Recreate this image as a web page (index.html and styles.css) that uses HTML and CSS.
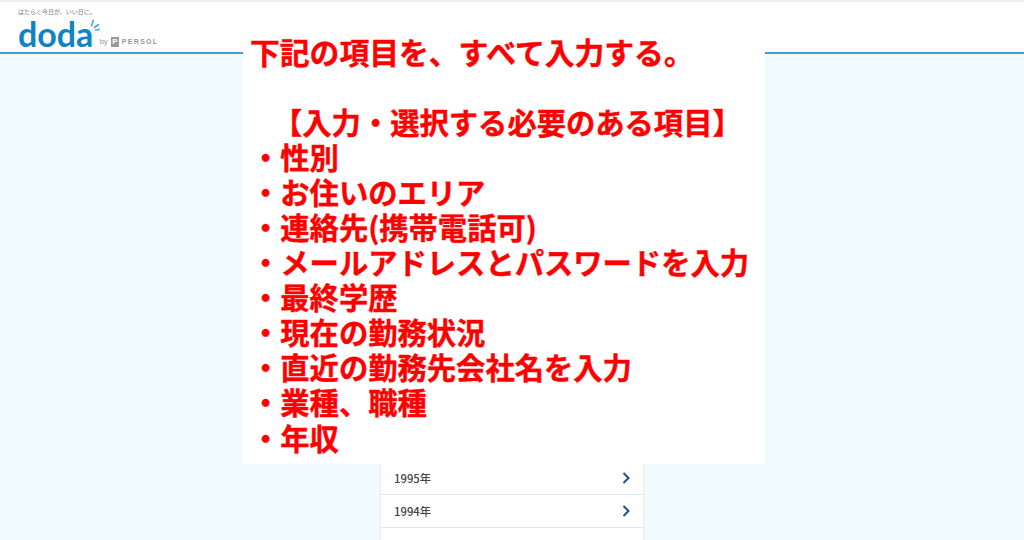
FILE: index.html
```html
<!DOCTYPE html>
<html lang="ja">
<head>
<meta charset="utf-8">
<title>doda</title>
<link rel="stylesheet" href="styles.css">
</head>
<body>
<div class="page">
  <header class="site-header">
    <div class="brand">
      <p class="tagline">はたらく今日が、いい日に。</p>
      <div class="logo-row">
        <span class="logo">doda</span>
        <svg class="spark" viewBox="0 0 10 12" width="10" height="12"><path d="M1.5 7 3.2 1.5M4.5 8.5 8.5 5.5M5.5 11 9.5 10.5" stroke="#4aa8dc" stroke-width="1.6" fill="none" stroke-linecap="round"/></svg>
        <span class="by">by</span>
        <span class="pmark">P</span>
        <span class="persol">PERSOL</span>
      </div>
    </div>
  </header>
  <main class="content">
    <ul class="year-list">
      <li class="year"><span>1995年</span><svg class="chev" viewBox="0 0 8 12" width="8" height="12"><path d="M1.5 1 6.5 6 1.5 11" stroke="#1f4f96" stroke-width="2" fill="none"/></svg></li>
      <li class="year"><span>1994年</span><svg class="chev" viewBox="0 0 8 12" width="8" height="12"><path d="M1.5 1 6.5 6 1.5 11" stroke="#1f4f96" stroke-width="2" fill="none"/></svg></li>
      <li class="year"></li>
    </ul>
  </main>
  <section class="notice">
    <p class="lead">下記の項目を、すべて入力する。</p>
    <p class="blank">&nbsp;</p>
    <p class="indent">【入力・選択する必要のある項目】</p>
    <p>・性別</p>
    <p>・お住いのエリア</p>
    <p>・連絡先(携帯電話可)</p>
    <p>・メールアドレスとパスワードを入力</p>
    <p>・最終学歴</p>
    <p>・現在の勤務状況</p>
    <p>・直近の勤務先会社名を入力</p>
    <p>・業種、職種</p>
    <p>・年収</p>
  </section>
</div>
</body>
</html>
```
FILE: styles.css
```css
* { box-sizing: border-box; margin: 0; padding: 0; }
html, body { height: 100%; overflow: hidden; }
body { font-family: "Noto Sans CJK JP", "Noto Sans", sans-serif; background: #f0faff; }
.page { position: relative; height: 540px; overflow: hidden; }
.site-header {
  height: 54px;
  background: #fff;
  border-top: 2px solid #eeeeee;
  border-bottom: 2px solid #3f9fd8;
  padding: 6px 0 0 18px;
}
.tagline { font-size: 6px; line-height: 8px; color: #777; }
.logo-row { display: flex; align-items: flex-end; height: 33px; padding-top: 3px; }
.logo {
  font-family: "Lato", sans-serif;
  font-weight: 700;
  font-size: 34px;
  line-height: 30px;
  letter-spacing: 0;
  color: #0e84c6;
}
.spark { align-self: flex-start; margin: 0 0 0 -3px; }
.by { font-family: "Liberation Sans", sans-serif; font-size: 8px; line-height: 10px; color: #999; margin: 0 3px 2px -1px; }
.pmark { width: 8px; height: 10px; margin: 0 3px 2px 0; background: #999; color: #fff; font: 700 8px/10px "Liberation Sans", sans-serif; text-align: center; }
.persol { font-family: "Liberation Sans", sans-serif; font-size: 7px; line-height: 10px; letter-spacing: 1.3px; color: #999; margin-bottom: 2px; font-weight: 700; }
.content { display: flex; justify-content: center; }
.year-list { list-style: none; width: 264px; padding-top: 408px; background: #fff; border-left: 1px solid #e6edf1; border-right: 1px solid #e6edf1; }
.year {
  height: 33px;
  display: flex;
  align-items: center;
  justify-content: space-between;
  padding: 0 13px;
  font-size: 11.3px;
  font-weight: 500;
  color: #444;
  border-bottom: 1px solid #dfe8ec;
}
.notice {
  position: absolute;
  left: 243px;
  top: 32px;
  width: 522px;
  height: 432px;
  background: #fff;
  padding: 1.5px 0 0 8px;
  color: #ff0000;
  font-size: 29.3px;
  font-weight: 700;
  -webkit-text-stroke: 0.4px #ff0000;
  line-height: 35.1px;
  white-space: nowrap;
}
.lead { font-size: 29.8px; margin-left: -1px; }
.indent { padding-left: 22px; }
```
